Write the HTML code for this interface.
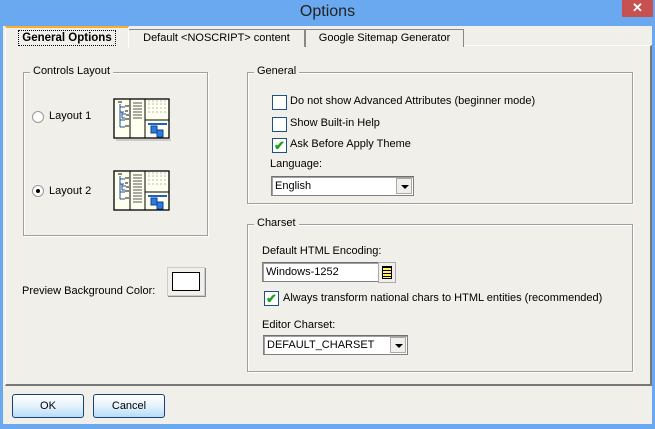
<!DOCTYPE html><html><head><style>
body{margin:0;width:655px;height:429px;background:#6aa9f0;font-family:"Liberation Sans",sans-serif;font-size:11px;color:#000;position:relative;overflow:hidden}
.a{position:absolute}
.fs{position:absolute;border:1px solid #a0a0a0;box-shadow:1px 1px 0 #fff inset,1px 1px 0 #fff}
.lg{position:absolute;background:#f0efea;padding:0 3px;top:-8px;left:6px}
.cb{position:absolute;width:13px;height:13px;border:1px solid #1c5180;background:#fff}
.tab{position:absolute;background:#f0efea;border:1px solid #888;border-bottom:none;height:17px;text-align:center;line-height:17px;font-size:11px}
.inp{position:absolute;background:#fff;border:1px solid #808080;border-top-color:#707070;box-shadow:inset 1px 1px 0 #a0a0a0;height:18px;line-height:18px;padding-left:3px;font-size:11px}
.dd{position:absolute;right:1px;top:1px;width:16px;height:16px;background:#f0efea;border:1px solid #aaa;box-sizing:border-box}
.dd:after{content:"";position:absolute;left:4px;top:6px;border:4px solid transparent;border-top:4px solid #000;border-bottom:none}
.btn{position:absolute;top:394px;width:70px;height:22px;border:1px solid #1a3f7a;border-radius:3px;background:linear-gradient(#fff,#e4f2fc 50%,#b6ddf8);text-align:center;line-height:22px;font-size:11px}
</style></head><body>
<div class="a" style="left:0;top:0;width:655px;height:26px;text-align:center;font-size:16px;line-height:24px;color:#222">Options</div>
<div class="a" style="left:622px;top:0;width:31px;height:17px;background:#c75050;color:#fff;text-align:center;font-size:13px;line-height:16px;font-weight:bold">✕</div>
<div class="a" style="left:3px;top:26px;width:649px;height:398px;background:#f0efea"></div>
<div class="a" style="left:5px;top:45px;width:644px;height:338px;border:1px solid #999;border-top-color:#fff;border-left-color:#fff;border-right:2px solid #777;border-bottom:2px solid #777"></div>
<div class="tab" style="left:128px;top:29px;width:175px">Default &lt;NOSCRIPT&gt; content</div>
<div class="tab" style="left:305px;top:29px;width:157px">Google Sitemap Generator</div>
<div class="tab" style="left:5px;top:26px;width:122px;height:20px;border-top:2px solid #f5b030;border-color:#fff;border-top-color:#f5b030"><span style="display:inline-block;border:1px dotted #000;padding:0 3px;line-height:14px;margin-top:2px;font-weight:bold;font-size:11.5px">General Options</span></div>

<div class="fs" style="left:23px;top:72px;width:183px;height:162px"><span class="lg" style="left:6px">Controls Layout</span></div>
<div class="a" style="left:32px;top:111px;width:10px;height:10px;border-radius:50%;border:1px solid #999;background:#fff"></div>
<div class="a" style="left:49px;top:110px">Layout 1</div>
<div class="a" style="left:32px;top:185px;width:10px;height:10px;border-radius:50%;border:1px solid #999;background:#fff"><div class="a" style="left:3px;top:3px;width:4px;height:4px;border-radius:50%;background:#000"></div></div>
<div class="a" style="left:49px;top:185px">Layout 2</div>

<svg class="a" style="left:113px;top:98px" width="60" height="44"><rect x="1" y="1" width="55" height="39" fill="#fffff0" stroke="#000" stroke-width="1.3"/><rect x="3" y="41" width="55" height="2" fill="#ccc"/><line x1="17" y1="1" x2="17" y2="40" stroke="#000"/><line x1="32" y1="1" x2="32" y2="40" stroke="#000"/><line x1="32" y1="22" x2="56" y2="22" stroke="#000"/><path d="M7 6v23M7 9h5M7 14h4M9 14v6M9 16h4M9 20h3M7 22h5M7 29h5" stroke="#1c4f9a" fill="none"/><path d="M5 4h4M12 8h4M12 13h3M13 17h3M12 21h4M12 28h4" stroke="#888" stroke-width="2"/><path d="M20 5h9M20 8h9M20 11h9M20 14h9M20 17h9M20 20h9" stroke="#555"/><path d="M35 3h19M35 6h18M35 10h18M35 14h18" stroke="#bbb" stroke-dasharray="2 2"/><rect x="35" y="25" width="19" height="2" fill="#1c60c0"/><rect x="38" y="28" width="6" height="7" fill="#2a7ae0" stroke="#104090"/><rect x="44" y="32" width="6" height="7" fill="#2a7ae0" stroke="#104090"/></svg>
<svg class="a" style="left:113px;top:170px" width="60" height="44"><rect x="1" y="1" width="55" height="39" fill="#fffff0" stroke="#000" stroke-width="1.3"/><line x1="17" y1="1" x2="17" y2="40" stroke="#000"/><line x1="32" y1="1" x2="32" y2="40" stroke="#000"/><line x1="32" y1="22" x2="56" y2="22" stroke="#000"/><path d="M7 6v23M7 9h5M7 14h4M9 14v6M9 16h4M9 20h3M7 22h5M7 29h5" stroke="#1c4f9a" fill="none"/><path d="M5 4h4M12 8h4M12 13h3M13 17h3M12 21h4M12 28h4" stroke="#888" stroke-width="2"/><path d="M20 5h9M20 8h9M20 11h9M20 14h9M20 17h9M20 20h9M20 23h9M20 26h9M20 29h9M20 32h9" stroke="#555"/><path d="M35 3h19M35 6h18M35 10h18M35 14h18" stroke="#bbb" stroke-dasharray="2 2"/><rect x="35" y="25" width="19" height="2" fill="#1c60c0"/><rect x="38" y="28" width="6" height="7" fill="#2a7ae0" stroke="#104090"/><rect x="44" y="32" width="6" height="7" fill="#2a7ae0" stroke="#104090"/></svg>

<div class="a" style="left:22px;top:285px">Preview Background Color:</div>
<div class="a" style="left:167px;top:267px;width:36px;height:27px;border:1px solid #ccc;box-shadow:1px 1px 0 #888"><div class="a" style="left:4px;top:4px;width:26px;height:17px;background:#fff;border:1px solid #000"></div></div>

<div class="fs" style="left:247px;top:72px;width:384px;height:130px"><span class="lg" style="left:6px">General</span></div>
<div class="cb" style="left:272px;top:95px"></div><div class="a" style="left:290px;top:95px">Do not show Advanced Attributes (beginner mode)</div>
<div class="cb" style="left:272px;top:117px"></div><div class="a" style="left:290px;top:117px">Show Built-in Help</div>
<div class="cb" style="left:272px;top:138px;color:#21a121;font-size:13px;line-height:13px;text-align:center;font-weight:bold">✔</div><div class="a" style="left:290px;top:138px">Ask Before Apply Theme</div>
<div class="a" style="left:270px;top:158px">Language:</div>
<div class="inp" style="left:271px;top:176px;width:138px">English<div class="dd"></div></div>

<div class="fs" style="left:247px;top:224px;width:384px;height:146px"><span class="lg" style="left:6px">Charset</span></div>
<div class="a" style="left:262px;top:245px">Default HTML Encoding:</div>
<div class="inp" style="left:262px;top:262px;width:112px">Windows-1252</div>
<div class="a" style="left:378px;top:262px;width:16px;height:19px;border:1px solid #aaa;background:#f0efea"><div class="a" style="left:3px;top:3px;width:8px;height:11px;background:repeating-linear-gradient(#000 0 1px,#ffef70 1px 3px);border:1px solid #000"></div></div>
<div class="cb" style="left:264px;top:291px;color:#21a121;font-size:13px;line-height:13px;text-align:center;font-weight:bold">✔</div><div class="a" style="left:283px;top:292px">Always transform national chars to HTML entities (recommended)</div>
<div class="a" style="left:262px;top:319px">Editor Charset:</div>
<div class="inp" style="left:263px;top:335px;width:140px">DEFAULT_CHARSET<div class="dd"></div></div>

<div class="btn" style="left:12px">OK</div>
<div class="btn" style="left:93px">Cancel</div>
</body></html>
